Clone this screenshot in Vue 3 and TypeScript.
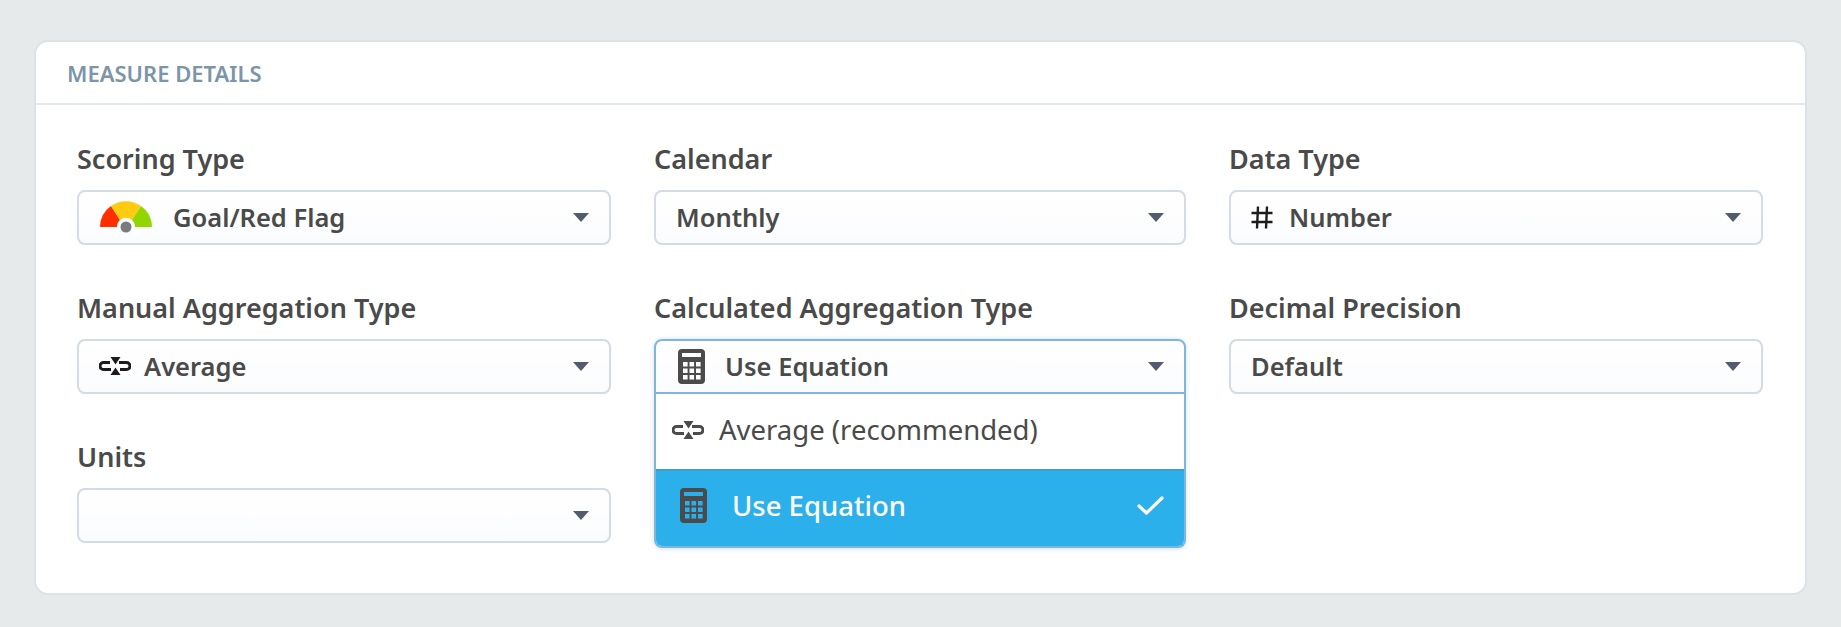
<script setup lang="ts">
interface Field {
  label: string
  value: string
  icon?: 'gauge' | 'hash' | 'average' | 'calc'
  open?: boolean
}

const fields: Field[] = [
  { label: 'Scoring Type', value: 'Goal/Red Flag', icon: 'gauge' },
  { label: 'Calendar', value: 'Monthly' },
  { label: 'Data Type', value: 'Number', icon: 'hash' },
  { label: 'Manual Aggregation Type', value: 'Average', icon: 'average' },
  { label: 'Calculated Aggregation Type', value: 'Use Equation', icon: 'calc', open: true },
  { label: 'Decimal Precision', value: 'Default' },
  { label: 'Units', value: '' }
]

// calculator body with the display and keys punched out, so the row colour shows through
const rect = (x: number, y: number, w: number, h: number) => `M${x} ${y}h${w}v${h}h${-w}z`
const calcKeys = [0, 1, 2]
  .flatMap((row) => [0, 1, 2].map((col) => rect(5 + col * 6.5, 13 + row * 6.5, 4.6, 4.6)))
  .join('')
const calcPath =
  'M4 0h19a4 4 0 0 1 4 4v27a4 4 0 0 1-4 4H4a4 4 0 0 1-4-4V4a4 4 0 0 1 4-4z' + rect(4, 4, 19, 4) + calcKeys
</script>

<template>
  <div class="page">
    <svg class="sprite" aria-hidden="true">
      <symbol id="icon-average" viewBox="0 0 32 18">
        <path d="M11 5.5H4.5a3.5 3.5 0 0 0 0 7H12" fill="none" stroke="currentColor" stroke-width="3" />
        <path d="M20 5.5h7.5a3.5 3.5 0 0 1 0 7H21" fill="none" stroke="currentColor" stroke-width="3" />
        <path d="M11.5 0h10L16.5 7.5zM11.5 18h10L16.5 10.5z" fill="currentColor" />
      </symbol>
      <symbol id="icon-calc" viewBox="0 0 27 35">
        <path :d="calcPath" fill="#4b4b4b" fill-rule="evenodd" />
      </symbol>
    </svg>

    <section class="card">
      <header class="card-head">Measure Details</header>
      <div class="grid">
        <div v-for="f in fields" :key="f.label" class="field">
          <label class="field-label">{{ f.label }}</label>
          <div class="select" :class="{ open: f.open }">
            <svg v-if="f.icon === 'gauge'" class="ico-gauge" viewBox="0 0 52 32">
              <path d="M0 26A26 26 0 0 1 11 5L20 19A9 9 0 0 0 17 26z" fill="#ff2f00" />
              <path d="M11 5A26 26 0 0 1 41 5L32 19A9 9 0 0 0 20 19z" fill="#ffcb11" />
              <path d="M41 5A26 26 0 0 1 52 26H35A9 9 0 0 0 32 19z" fill="#93d500" />
              <circle cx="26" cy="26" r="5.5" fill="#7b7b7b" />
            </svg>
            <svg v-else-if="f.icon === 'hash'" class="ico-hash" viewBox="0 0 22 23">
              <path d="M7 0.5 6 22.5M16 0.5 15 22.5M0.5 7H21.5M0.5 16H21.5" fill="none" stroke="#1c1c1c" stroke-width="2.4" />
            </svg>
            <svg v-else-if="f.icon === 'average'" class="ico-average"><use href="#icon-average" /></svg>
            <svg v-else-if="f.icon === 'calc'" class="ico-calc in-select"><use href="#icon-calc" /></svg>
            <span class="select-value">{{ f.value }}</span>
            <i class="caret"></i>
          </div>

          <ul v-if="f.open" class="menu">
            <li class="menu-item">
              <svg class="ico-average soft"><use href="#icon-average" /></svg>
              <span>Average (recommended)</span>
            </li>
            <li class="menu-item active">
              <svg class="ico-calc"><use href="#icon-calc" /></svg>
              <span class="active-text">Use Equation</span>
              <svg class="ico-check" viewBox="0 0 27 19">
                <path d="M2 10l7.5 7L25 2" fill="none" stroke="#fff" stroke-width="3.2" stroke-linecap="round" stroke-linejoin="round" />
              </svg>
            </li>
          </ul>
        </div>
      </div>
    </section>
  </div>
</template>

<style>
body {
  background: #e7eaeb;
}
</style>

<style scoped>
.page {
  padding: 40px 34px 0 34px;
  height: 587px;
  background: #e7eaeb;
  font-family: "Noto Sans", "Open Sans", sans-serif;
  color: #4a4a4a;
}

.sprite {
  position: absolute;
  width: 0;
  height: 0;
}

.card {
  background: #fff;
  border: 2px solid #dbe2ea;
  border-radius: 14px;
  height: 555px;
  box-sizing: border-box;
}

.card-head {
  height: 63px;
  box-sizing: border-box;
  padding: 18px 0 0 31px;
  border-bottom: 2px solid #e3e8f1;
  color: #7d95a8;
  font-size: 22px;
  line-height: 26px;
  font-weight: 600;
  text-transform: uppercase;
}

.grid {
  display: grid;
  grid-template-columns: 534px 532px 534px;
  column-gap: 43px;
  row-gap: 44px;
  padding: 35px 41px 0;
}

.field {
  position: relative;
}

.field-label {
  display: block;
  height: 50px;
  font-size: 27px;
  line-height: 37px;
  font-weight: 600;
}

.select {
  display: flex;
  align-items: center;
  height: 55px;
  box-sizing: border-box;
  padding: 0 20px 1px;
  border: 2px solid #d3dbe5;
  border-radius: 8px;
  background: linear-gradient(#fff, #fbfcfe);
  font-size: 25.5px;
  font-weight: 600;
}

.select.open {
  border-color: #7fb6da;
  border-radius: 8px 8px 0 0;
  box-shadow: 0 0 4px rgba(127, 182, 218, 0.4);
}

.select-value {
  flex: 1;
}

.caret {
  width: 0;
  height: 0;
  border-left: 8px solid transparent;
  border-right: 8px solid transparent;
  border-top: 9px solid #555b6e;
}

.ico-gauge {
  width: 52px;
  height: 32px;
  margin-left: 1px;
  margin-right: 21px;
}

.ico-hash {
  width: 22px;
  height: 23px;
  margin-right: 16px;
}

.ico-average {
  width: 32px;
  height: 18px;
  margin-right: 13px;
  color: #1c1c1c;
  flex: none;
}

.ico-average.soft {
  color: #4b4b4b;
  margin-right: 15px;
}

.ico-calc {
  width: 27px;
  height: 35px;
  margin-right: 25px;
  flex: none;
}

.ico-calc.in-select {
  margin-left: 2px;
  margin-right: 20px;
}

.menu {
  position: absolute;
  top: 105px;
  left: 0;
  right: 0;
  margin: 0;
  padding: 0;
  list-style: none;
  background: #fff;
  border: 2px solid #7fb6da;
  border-top: 0;
  border-radius: 0 0 8px 8px;
  box-shadow: 0 1px 4px rgba(127, 182, 218, 0.4);
  overflow: hidden;
  font-size: 27.5px;
}

.menu-item {
  display: flex;
  align-items: center;
  height: 75px;
  box-sizing: border-box;
  padding: 0 20px 4px 16px;
}

.menu-item.active {
  height: 77px;
  padding-left: 24px;
  padding-bottom: 6px;
  background: #2cb0ec;
  border-top: 2px solid #38a0d4;
  color: #fff;
  font-weight: 500;
}

.active-text {
  flex: 1;
}

.ico-check {
  width: 27px;
  height: 19px;
}
</style>
